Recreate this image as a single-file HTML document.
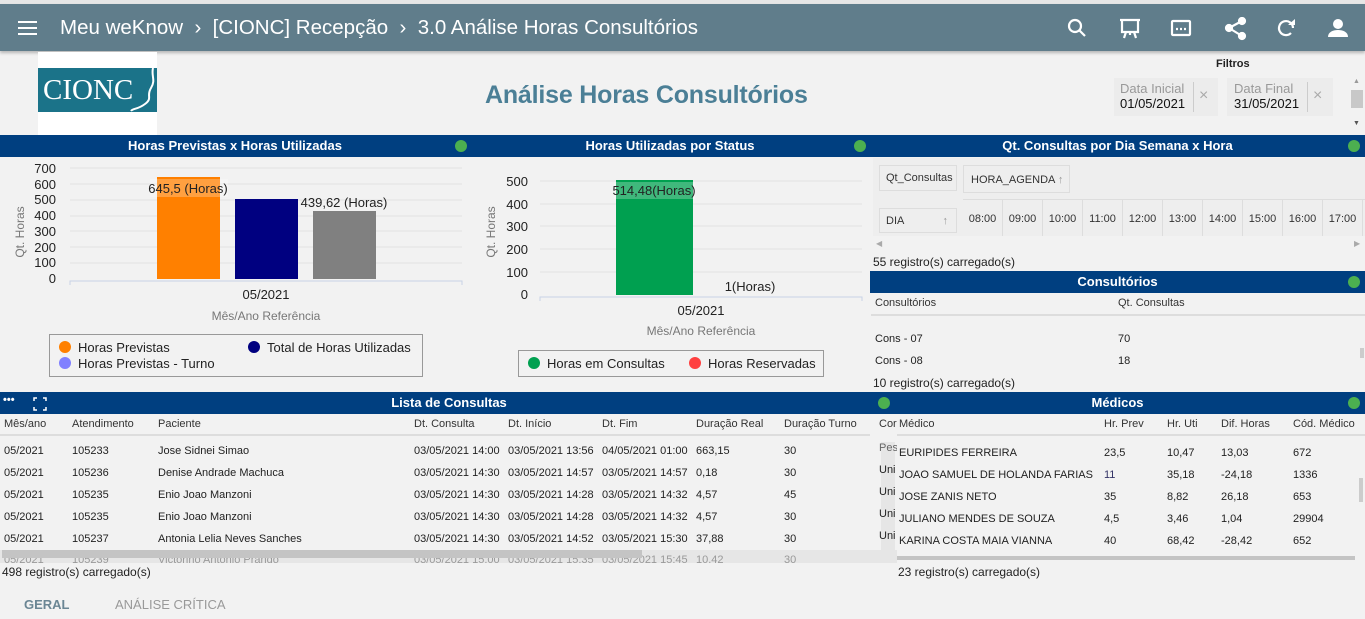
<!DOCTYPE html>
<html><head><meta charset="utf-8"><style>
*{margin:0;padding:0;box-sizing:border-box}
body{width:1365px;height:619px;overflow:hidden;background:#f2f2f2;font-family:"Liberation Sans",Arial,sans-serif;position:relative;color:#222}
.a{position:absolute;white-space:nowrap}
.hdr{position:absolute;background:#003f80;color:#fff;font-weight:bold;font-size:13px;text-align:center;height:22px;line-height:22px}
.dot{position:absolute;width:12px;height:12px;border-radius:50%;background:#4caf50;top:5px}
.t{font-size:11px;color:#222}
.th{font-size:11px;color:#333}
</style></head><body>
<div class="a" style="left:0;top:0;width:1365px;height:4px;background:#e6e6e6"></div>
<div class="a" style="left:0;top:4px;width:1365px;height:47px;background:#607d8b;box-shadow:0 2px 3px rgba(0,0,0,.25)"></div>
<svg class="a" style="left:18px;top:20px" width="20" height="16"><rect y="1" width="19" height="2" fill="#fff"/><rect y="7" width="19" height="2" fill="#fff"/><rect y="13" width="19" height="2" fill="#fff"/></svg>
<div class="a" style="left:60px;top:16px;font-size:20.5px;color:#fff">Meu weKnow&nbsp;&nbsp;›&nbsp;&nbsp;[CIONC] Recepção&nbsp;&nbsp;›&nbsp;&nbsp;3.0 Análise Horas Consultórios</div>
<svg class="a" style="left:1066px;top:17px" width="290" height="24" fill="none" stroke="#fff" stroke-width="2.2">
<circle cx="9" cy="9" r="6"/><path d="M13 13l6 6"/>
<path d="M54 3h20M56 3v12h16V3M60 15l-2 6M68 15l2 6M64 15v3" />
<rect x="106" y="4" width="18" height="14" rx="1"/><path d="M110 12h2M114 12h2M118 12h2"/>
<circle cx="176" cy="4" r="3" fill="#fff"/><circle cx="163" cy="11" r="3" fill="#fff"/><circle cx="176" cy="19" r="3" fill="#fff"/><path d="M176 4l-13 7 13 8"/>
<path d="M227 11a7 7 0 1 0 -2 5"/><path d="M222 8h7v-6" fill="#fff" stroke="none"/>
<circle cx="272" cy="7" r="5" fill="#fff" stroke="none"/><path d="M262 20c0-5 5-7 10-7s10 2 10 7z" fill="#fff" stroke="none"/>
</svg>
<div class="a" style="left:38px;top:52px;width:119px;height:83px;background:#fff"></div>
<div class="a" style="left:38px;top:68px;width:119px;height:44px;background:#1b7389;color:#fff;font-family:'Liberation Serif',serif;font-size:29px;line-height:44px;padding-left:5px">CIONC</div>
<svg class="a" style="left:125px;top:68px" width="32" height="44"><path d="M28 0c-2 8 3 12-2 20s2 10-6 16-12 4-14 7" stroke="#fff" stroke-width="2" fill="none"/></svg>
<div class="a" style="left:485px;top:81px;font-size:25px;font-weight:bold;color:#4b7f96;letter-spacing:-0.2px">Análise Horas Consultórios</div>
<div class="a" style="left:1216px;top:58px;font-size:11px;font-weight:bold">Filtros</div>
<div class="a" style="left:1114px;top:78px;width:104px;height:38px;background:#ececec"></div>
<div class="a" style="left:1120px;top:81px;font-size:13px;color:#999">Data Inicial</div>
<div class="a" style="left:1120px;top:96px;font-size:13px;color:#111">01/05/2021</div>
<div class="a" style="left:1193px;top:82px;width:1px;height:30px;background:#ccc"></div>
<div class="a" style="left:1199px;top:87px;font-size:16px;color:#aaa">×</div>
<div class="a" style="left:1227px;top:78px;width:106px;height:38px;background:#ececec"></div>
<div class="a" style="left:1234px;top:81px;font-size:13px;color:#999">Data Final</div>
<div class="a" style="left:1234px;top:96px;font-size:13px;color:#111">31/05/2021</div>
<div class="a" style="left:1307px;top:82px;width:1px;height:30px;background:#ccc"></div>
<div class="a" style="left:1313px;top:87px;font-size:16px;color:#aaa">×</div>
<div class="a" style="left:1351px;top:90px;width:12px;height:18px;background:#c8c8c8"></div>
<div class="a" style="left:1353px;top:78px;font-size:7px;color:#999">▲</div>
<div class="a" style="left:1353px;top:120px;font-size:7px;color:#555">▼</div>

<!-- Panel 1 -->
<div class="hdr" style="left:0;top:135px;width:470px">Horas Previstas x Horas Utilizadas<div class="dot" style="left:455px"></div></div>
<svg class="a" style="left:0;top:157px" width="470" height="230" font-family="Liberation Sans" font-size="13">
<g stroke="#e2e2e2"><line x1="70" x2="462" y1="11" y2="11"/><line x1="70" x2="462" y1="27" y2="27"/><line x1="70" x2="462" y1="43" y2="43"/><line x1="70" x2="462" y1="59" y2="59"/><line x1="70" x2="462" y1="74" y2="74"/><line x1="70" x2="462" y1="90" y2="90"/><line x1="70" x2="462" y1="106" y2="106"/></g>
<g fill="#222" text-anchor="end"><text x="56" y="16">700</text><text x="56" y="32">600</text><text x="56" y="47">500</text><text x="56" y="63">400</text><text x="56" y="79">300</text><text x="56" y="95">200</text><text x="56" y="110">100</text><text x="56" y="126">0</text></g>
<text transform="translate(24,75) rotate(-90)" fill="#777" font-size="12" text-anchor="middle">Qt. Horas</text>
<rect x="157" y="20" width="63" height="102" fill="#ff8000"/>
<rect x="235" y="42" width="63" height="80" fill="#000080"/>
<rect x="313" y="54" width="63" height="68" fill="#808080"/>
<rect x="150" y="22" width="78" height="18" fill="#fff" opacity=".25"/>
<text x="188" y="36" fill="#222" text-anchor="middle">645,5 (Horas)</text>
<text x="344" y="50" fill="#222" text-anchor="middle">439,62 (Horas)</text>
<path d="M70 128v-4h392v4" stroke="#c8d3e6" fill="none"/>
<text x="266" y="142" fill="#222" text-anchor="middle">05/2021</text>
<text x="266" y="163" fill="#777" font-size="12" text-anchor="middle">Mês/Ano Referência</text>
<rect x="49.5" y="177.5" width="373" height="42" fill="none" stroke="#999"/>
<circle cx="65" cy="190" r="6" fill="#ff8000"/><text x="78" y="195" fill="#222">Horas Previstas</text>
<circle cx="254" cy="190" r="6" fill="#000080"/><text x="267" y="195" fill="#222">Total de Horas Utilizadas</text>
<circle cx="65" cy="206" r="6" fill="#8080ff"/><text x="78" y="211" fill="#222">Horas Previstas - Turno</text>
</svg>

<!-- Panel 2 -->
<div class="hdr" style="left:470px;top:135px;width:400px">Horas Utilizadas por Status<div class="dot" style="left:384px"></div></div>
<svg class="a" style="left:470px;top:157px" width="400" height="230" font-family="Liberation Sans" font-size="13">
<g stroke="#e2e2e2"><line x1="70" x2="392" y1="24" y2="24"/><line x1="70" x2="392" y1="47" y2="47"/><line x1="70" x2="392" y1="69" y2="69"/><line x1="70" x2="392" y1="92" y2="92"/><line x1="70" x2="392" y1="115" y2="115"/></g>
<g fill="#222" text-anchor="end"><text x="58" y="29">500</text><text x="58" y="52">400</text><text x="58" y="74">300</text><text x="58" y="97">200</text><text x="58" y="120">100</text><text x="58" y="142">0</text></g>
<text transform="translate(25,75) rotate(-90)" fill="#777" font-size="12" text-anchor="middle">Qt. Horas</text>
<rect x="146" y="23" width="77" height="115" fill="#00a050"/>
<rect x="144" y="25" width="81" height="17" fill="#fff" opacity=".25"/>
<text x="184" y="38" fill="#222" text-anchor="middle">514,48(Horas)</text>
<text x="280" y="134" fill="#222" text-anchor="middle">1(Horas)</text>
<path d="M70 144v-4h322v4" stroke="#c8d3e6" fill="none"/>
<text x="231" y="158" fill="#222" text-anchor="middle">05/2021</text>
<text x="231" y="178" fill="#777" font-size="12" text-anchor="middle">Mês/Ano Referência</text>
<rect x="48.5" y="193.5" width="305" height="26" fill="none" stroke="#999"/>
<circle cx="64" cy="206" r="6" fill="#00a050"/><text x="77" y="211" fill="#222">Horas em Consultas</text>
<circle cx="225" cy="206" r="6" fill="#ff4040"/><text x="238" y="211" fill="#222">Horas Reservadas</text>
</svg>

<!-- Panel 3 -->
<div class="hdr" style="left:870px;top:135px;width:495px">Qt. Consultas por Dia Semana x Hora<div class="dot" style="left:478px"></div></div>
<div class="a" style="left:873px;top:158px;width:492px;height:78px;background:#eeeeee"></div>
<div class="a th" style="left:879px;top:165px;width:78px;height:26px;border:1px solid #ddd;line-height:24px;padding-left:6px">Qt_Consultas</div>
<div class="a th" style="left:963px;top:165px;width:107px;height:28px;border:1px solid #ddd;line-height:28px;padding-left:7px">HORA_AGENDA <span style="color:#999">↑</span></div>
<div class="a th" style="left:879px;top:208px;width:78px;height:25px;border:1px solid #ddd;line-height:24px;padding-left:6px">DIA<span style="position:absolute;right:8px;color:#999">↑</span></div>
<div class="a" style="left:963px;top:199px;width:402px;height:37px;border-top:1px solid #ddd;display:flex">
<div class="th" style="width:40px;border-right:1px solid #ddd;text-align:center;line-height:38px">08:00</div><div class="th" style="width:40px;border-right:1px solid #ddd;text-align:center;line-height:38px">09:00</div><div class="th" style="width:40px;border-right:1px solid #ddd;text-align:center;line-height:38px">10:00</div><div class="th" style="width:40px;border-right:1px solid #ddd;text-align:center;line-height:38px">11:00</div><div class="th" style="width:40px;border-right:1px solid #ddd;text-align:center;line-height:38px">12:00</div><div class="th" style="width:40px;border-right:1px solid #ddd;text-align:center;line-height:38px">13:00</div><div class="th" style="width:40px;border-right:1px solid #ddd;text-align:center;line-height:38px">14:00</div><div class="th" style="width:40px;border-right:1px solid #ddd;text-align:center;line-height:38px">15:00</div><div class="th" style="width:40px;border-right:1px solid #ddd;text-align:center;line-height:38px">16:00</div><div class="th" style="width:40px;border-right:1px solid #ddd;text-align:center;line-height:38px">17:00</div></div>
<div class="a" style="left:876px;top:239px;font-size:8px;color:#aaa">◀</div>
<div class="a" style="left:1354px;top:239px;font-size:8px;color:#aaa">▶</div>
<div class="a" style="left:873px;top:255px;font-size:12px">55 registro(s) carregado(s)</div>

<div class="hdr" style="left:870px;top:271px;width:495px">Consultórios<div class="dot" style="left:478px"></div></div>
<div class="a th" style="left:875px;top:297px">Consultórios</div>
<div class="a th" style="left:1118px;top:297px">Qt. Consultas</div>
<div class="a" style="left:871px;top:314px;width:494px;height:2px;background:#ddd"></div>
<div class="a t" style="left:875px;top:333px">Cons - 07</div><div class="a t" style="left:1118px;top:333px">70</div>
<div class="a t" style="left:875px;top:355px">Cons - 08</div><div class="a t" style="left:1118px;top:355px">18</div>
<div class="a" style="left:1360px;top:348px;width:4px;height:10px;background:#ccc"></div>
<div class="a" style="left:873px;top:376px;font-size:12px">10 registro(s) carregado(s)</div>

<!-- Lista -->
<div class="hdr" style="left:0;top:392px;width:898px">Lista de Consultas</div>
<div class="a" style="left:3px;top:394px;color:#fff;font-size:11px;font-weight:bold">•••</div>
<svg class="a" style="left:33px;top:397px" width="14" height="14" stroke="#fff" fill="none" stroke-width="1.5"><path d="M1 4V1h3M10 1h3v3M13 10v3h-3M4 13H1v-3"/></svg>
<div class="a" style="left:0;top:414px;width:870px;height:22px;border-bottom:2px solid #ddd"></div>
<div class="a th" style="left:4px;top:418px">Mês/ano</div><div class="a th" style="left:72px;top:418px">Atendimento</div><div class="a th" style="left:158px;top:418px">Paciente</div><div class="a th" style="left:414px;top:418px">Dt. Consulta</div><div class="a th" style="left:508px;top:418px">Dt. Início</div><div class="a th" style="left:602px;top:418px">Dt. Fim</div><div class="a th" style="left:696px;top:418px">Duração Real</div><div class="a th" style="left:784px;top:418px">Duração Turno</div><div class="a th" style="left:879px;top:418px">Cor</div>
<div class="a" style="left:881px;top:442px;width:14px;height:110px;background:#e6e6e6"></div>
<div class="a t" style="left:0;top:440px;line-height:22px;width:900px">
<div style="position:relative;height:22px"><span class="a" style="left:4px">05/2021</span><span class="a" style="left:72px">105233</span><span class="a" style="left:158px">Jose Sidnei Simao</span><span class="a" style="left:414px">03/05/2021 14:00</span><span class="a" style="left:508px">03/05/2021 13:56</span><span class="a" style="left:602px">04/05/2021 01:00</span><span class="a" style="left:696px">663,15</span><span class="a" style="left:784px">30</span><span class="a" style="left:879px;width:18px;overflow:hidden;color:#666;top:-3px">Pes</span></div>
<div style="position:relative;height:22px"><span class="a" style="left:4px">05/2021</span><span class="a" style="left:72px">105236</span><span class="a" style="left:158px">Denise Andrade Machuca</span><span class="a" style="left:414px">03/05/2021 14:30</span><span class="a" style="left:508px">03/05/2021 14:57</span><span class="a" style="left:602px">03/05/2021 14:57</span><span class="a" style="left:696px">0,18</span><span class="a" style="left:784px">30</span><span class="a" style="left:879px;width:18px;overflow:hidden;top:-3px">Uni</span></div>
<div style="position:relative;height:22px"><span class="a" style="left:4px">05/2021</span><span class="a" style="left:72px">105235</span><span class="a" style="left:158px">Enio Joao Manzoni</span><span class="a" style="left:414px">03/05/2021 14:30</span><span class="a" style="left:508px">03/05/2021 14:28</span><span class="a" style="left:602px">03/05/2021 14:32</span><span class="a" style="left:696px">4,57</span><span class="a" style="left:784px">45</span><span class="a" style="left:879px;width:18px;overflow:hidden;top:-3px">Uni</span></div>
<div style="position:relative;height:22px"><span class="a" style="left:4px">05/2021</span><span class="a" style="left:72px">105235</span><span class="a" style="left:158px">Enio Joao Manzoni</span><span class="a" style="left:414px">03/05/2021 14:30</span><span class="a" style="left:508px">03/05/2021 14:28</span><span class="a" style="left:602px">03/05/2021 14:32</span><span class="a" style="left:696px">4,57</span><span class="a" style="left:784px">30</span><span class="a" style="left:879px;width:18px;overflow:hidden;top:-3px">Uni</span></div>
<div style="position:relative;height:22px"><span class="a" style="left:4px">05/2021</span><span class="a" style="left:72px">105237</span><span class="a" style="left:158px">Antonia Lelia Neves Sanches</span><span class="a" style="left:414px">03/05/2021 14:30</span><span class="a" style="left:508px">03/05/2021 14:52</span><span class="a" style="left:602px">03/05/2021 15:30</span><span class="a" style="left:696px">37,88</span><span class="a" style="left:784px">30</span><span class="a" style="left:879px;width:18px;overflow:hidden;top:-3px">Uni</span></div>
</div>
<div class="a" style="left:0;top:550px;width:897px;height:13px;overflow:hidden;background:#e6e6e6;font-size:11px;color:#999;line-height:20px"><span class="a" style="left:4px">05/2021</span><span class="a" style="left:72px">105239</span><span class="a" style="left:158px">Victorino Antonio Prando</span><span class="a" style="left:414px">03/05/2021 15:00</span><span class="a" style="left:508px">03/05/2021 15:35</span><span class="a" style="left:602px">03/05/2021 15:45</span><span class="a" style="left:696px">10,42</span><span class="a" style="left:784px">30</span></div>
<div class="a" style="left:2px;top:550px;width:640px;height:8px;background:#c4c4c4"></div>
<div class="a" style="left:2px;top:565px;font-size:12px">498 registro(s) carregado(s)</div>

<!-- Medicos -->
<div class="hdr" style="left:870px;top:392px;width:495px">Médicos<div class="dot" style="left:478px"></div><div class="dot" style="left:8px"></div></div>
<div class="a" style="left:897px;top:414px;width:468px;height:22px;border-bottom:2px solid #ddd"></div>
<div class="a th" style="left:899px;top:418px">Médico</div><div class="a th" style="left:1104px;top:418px">Hr. Prev</div><div class="a th" style="left:1167px;top:418px">Hr. Uti</div><div class="a th" style="left:1221px;top:418px">Dif. Horas</div><div class="a th" style="left:1293px;top:418px">Cód. Médico</div>
<div class="a t" style="left:0;top:442px;width:1365px;line-height:22px">
<div style="position:relative;height:22px"><span class="a" style="left:899px">EURIPIDES FERREIRA</span><span class="a" style="left:1104px">23,5</span><span class="a" style="left:1167px">10,47</span><span class="a" style="left:1221px">13,03</span><span class="a" style="left:1293px">672</span></div>
<div style="position:relative;height:22px"><span class="a" style="left:899px">JOAO SAMUEL DE HOLANDA FARIAS</span><span class="a" style="left:1104px;color:#336">11</span><span class="a" style="left:1167px">35,18</span><span class="a" style="left:1221px">-24,18</span><span class="a" style="left:1293px">1336</span></div>
<div style="position:relative;height:22px"><span class="a" style="left:899px">JOSE ZANIS NETO</span><span class="a" style="left:1104px">35</span><span class="a" style="left:1167px">8,82</span><span class="a" style="left:1221px">26,18</span><span class="a" style="left:1293px">653</span></div>
<div style="position:relative;height:22px"><span class="a" style="left:899px">JULIANO MENDES DE SOUZA</span><span class="a" style="left:1104px">4,5</span><span class="a" style="left:1167px">3,46</span><span class="a" style="left:1221px">1,04</span><span class="a" style="left:1293px">29904</span></div>
<div style="position:relative;height:22px"><span class="a" style="left:899px">KARINA COSTA MAIA VIANNA</span><span class="a" style="left:1104px">40</span><span class="a" style="left:1167px">68,42</span><span class="a" style="left:1221px">-28,42</span><span class="a" style="left:1293px">652</span></div>
</div>
<div class="a" style="left:897px;top:556px;width:458px;height:4px;background:#c4c4c4"></div>
<div class="a" style="left:1359px;top:478px;width:4px;height:24px;background:#ccc"></div>
<div class="a" style="left:898px;top:565px;font-size:12px">23 registro(s) carregado(s)</div>

<div class="a" style="left:24px;top:597px;font-size:13px;font-weight:bold;color:#6b8694">GERAL</div>
<div class="a" style="left:115px;top:597px;font-size:13px;color:#999">ANÁLISE CRÍTICA</div>
</body></html>
